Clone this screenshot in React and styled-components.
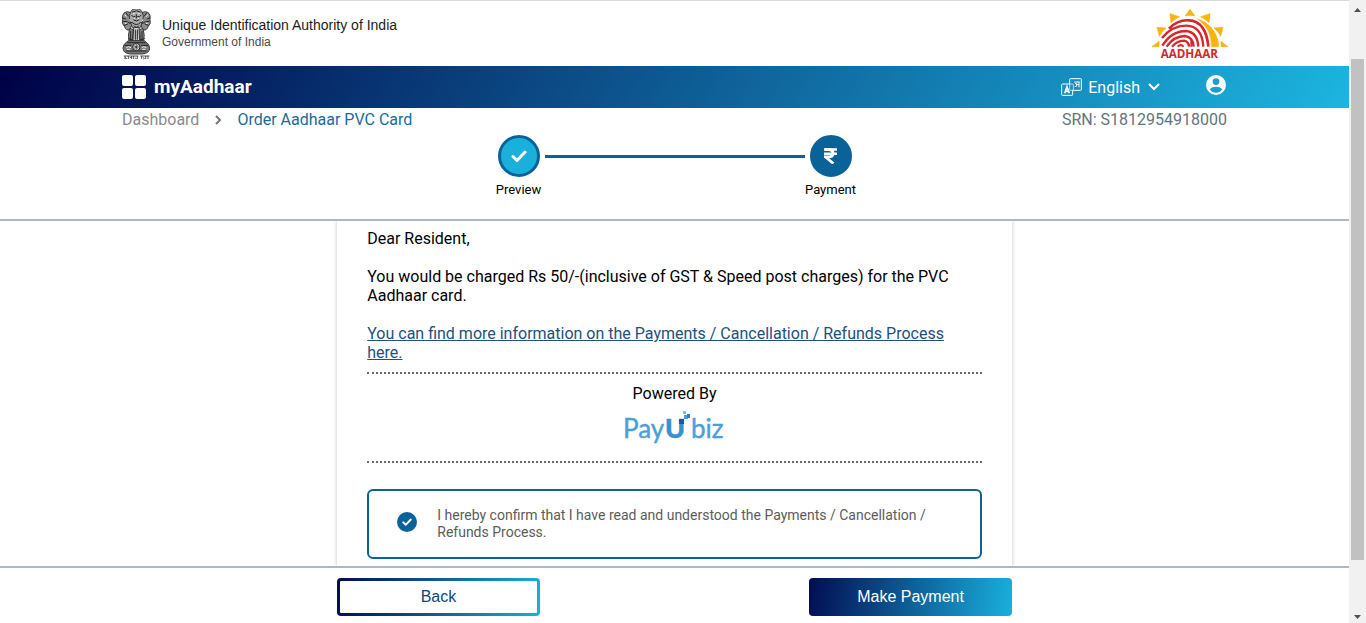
import React from "react";
import styled, { createGlobalStyle } from "styled-components";

const GlobalStyle = createGlobalStyle`
  * { box-sizing: border-box; }
  body {
    margin: 0;
    background: #fff;
    color: #000;
    font-family: Roboto, "Liberation Sans", sans-serif;
    font-size: 16px;
    line-height: 19px;
  }
  h1, h2, p { margin: 0; font-weight: 400; }
`;

const Shell = styled.div`
  display: flex;
  min-height: 100vh;
`;

const Page = styled.div`
  flex: 1;
  min-width: 0;
  display: flex;
  flex-direction: column;
`;

const Masthead = styled.header`
  display: flex;
  justify-content: space-between;
  align-items: flex-start;
  height: 66px;
  padding: 8px 120px 0;
  border-top: 1px solid #dadada;
`;

const Brand = styled.div`
  display: flex;
  gap: 10px;
`;

const BrandText = styled.div`
  padding-top: 7px;
  font-family: "Liberation Sans", Arial, sans-serif;
`;

const Authority = styled.p`
  font-size: 14px;
  line-height: 18px;
  color: #1c1c1c;
`;

const Government = styled.p`
  font-size: 12px;
  line-height: 17px;
  color: #4a4a4a;
`;

const NavBar = styled.nav`
  display: flex;
  justify-content: space-between;
  align-items: center;
  height: 42px;
  padding: 0 123px 0 122px;
  color: #fff;
  background: linear-gradient(120deg, #000046 0%, #1cb5e0 100%);
`;

const NavGroup = styled.div`
  display: flex;
  align-items: center;
  gap: ${(p) => p.$gap}px;
`;

const HomeLink = styled.a`
  display: flex;
  align-items: center;
  gap: 8px;
  color: #fff;
  font-size: 19px;
  font-weight: 700;
  line-height: 24px;
  text-decoration: none;
`;

const LanguagePicker = styled.label`
  display: flex;
  align-items: center;
  gap: 6px;
`;

const LanguageSelect = styled.select`
  appearance: none;
  border: 0;
  padding: 0;
  background: transparent;
  color: #fff;
  font: inherit;
  field-sizing: content;
  option { color: #000; }
`;

const IconButton = styled.button`
  display: flex;
  padding: 0 0 4px;
  border: 0;
  background: none;
  color: #fff;
`;

const StepArea = styled.section`
  border-bottom: 2px solid #adb8c0;
  padding: 2px 122px 21px;
`;

const Crumbs = styled.div`
  display: flex;
  justify-content: space-between;
  color: #5f7580;
`;

const Trail = styled.nav`
  display: flex;
  align-items: center;
  gap: 15px;
`;

const Crumb = styled.a`
  color: ${(p) => (p.$current ? "#186c9c" : "#8a8a8a")};
  text-decoration: none;
`;

const Stepper = styled.div`
  display: flex;
  justify-content: center;
  margin-top: 6px;
`;

const Step = styled.div`
  width: 52px;
  display: flex;
  flex-direction: column;
  align-items: center;
  gap: 4px;
  font-size: 13px;
  line-height: 17px;
`;

const StepCircle = styled.span`
  display: flex;
  align-items: center;
  justify-content: center;
  width: 42px;
  height: 42px;
  border: 3px solid #0a6398;
  border-radius: 50%;
  background: ${(p) => (p.$done ? "#19b0dc" : "#0a6398")};
`;

const StepLine = styled.span`
  width: 260px;
  height: 3px;
  margin-top: 20px;
  background: #0a6398;
`;

const Main = styled.main`
  flex: 1;
  display: flex;
  justify-content: center;
  overflow: hidden;
`;

const Card = styled.section`
  width: 50%;
  min-width: 320px;
  padding: 8px 30px 7px;
  box-shadow: 0 0 4px rgba(0, 0, 0, 0.24);
`;

const Paragraph = styled.p`
  margin-bottom: ${(p) => (p.$last ? 10 : 19)}px;
`;

const InfoLink = styled.a`
  color: #22507f;
`;

const Powered = styled.div`
  display: flex;
  flex-direction: column;
  align-items: center;
  gap: 8px;
  padding: 10px 0;
  border: dotted #6a6a6a;
  border-width: 2px 0;
`;

const Consent = styled.label`
  display: flex;
  align-items: flex-start;
  gap: 20px;
  margin-top: 26px;
  padding: 16px 28px;
  border: 2px solid #0a6398;
  border-radius: 6px;
  color: #5c5c5c;
  font-size: 14px;
  line-height: 17px;
`;

const CheckStack = styled.span`
  flex: none;
  display: grid;
  place-items: center;
  margin-top: 5px;
  > * { grid-area: 1 / 1; }
  svg { pointer-events: none; }
`;

const RoundCheckbox = styled.input`
  appearance: none;
  width: 20px;
  height: 20px;
  margin: 0;
  border: 2px solid #0a6398;
  border-radius: 50%;
  background: #fff;
  &:checked { background: #0a6398; }
`;

const Footer = styled.footer`
  display: flex;
  justify-content: center;
  border-top: 2px solid #adb8c0;
  padding: 10px 0 7px;
`;

const Actions = styled.div`
  width: 50%;
  min-width: 320px;
  display: flex;
  justify-content: space-between;
`;

const ActionButton = styled.button`
  width: 30%;
  height: 38px;
  border: 3px solid transparent;
  border-radius: 4px;
  font-family: "Liberation Sans", Arial, sans-serif;
  font-size: 16px;
  color: ${(p) => (p.$primary ? "#fff" : "#0b4a7a")};
  background: ${(p) =>
    p.$primary
      ? "linear-gradient(98deg, #020d51 0%, #19b0dc 100%) border-box"
      : "linear-gradient(#fff, #fff) padding-box, linear-gradient(98deg, #020d51 0%, #19b0dc 100%) border-box"};
`;

const ScrollRail = styled.div`
  position: sticky;
  top: 0;
  flex: none;
  display: flex;
  flex-direction: column;
  align-items: center;
  width: 17px;
  height: 100vh;
  padding: 8px 0 4px;
  background: #f1f1f1;
`;

const RailSpace = styled.span`
  flex: ${(p) => p.$size};
`;

const Thumb = styled.span`
  flex: 501;
  width: 13px;
  background: #c1c1c1;
`;

function Emblem() {
  const petals = [0, 45, 90, 135];
  return (
    <svg width="32" height="51" viewBox="-1 3 96 153" role="img" aria-label="State Emblem of India">
      <g stroke="#3a3a3a" strokeWidth="3" fill="#8c8c8c">
        <path d="M12 14q-8 8-5 20q-4 14 6 22q3 12 15 10l8-18l-4-34q-12-6-20 0z" />
        <path d="M84 14q8 8 5 20q4 14-6 22q-3 12-15 10l-8-18l4-34q12-6 20 0z" />
        <path d="M32 10q4-9 16-8q12-1 16 8q8 12 4 26l-8 22l-12 6l-12-6l-8-22q-4-14 4-26z" fill="#a8a8a8" />
        <path d="M28 62l10 2l-2 34h-10q-4-16 2-36z" />
        <path d="M68 62l-10 2l2 34h10q4-16-2-36z" />
        <path d="M40 58h16l2 40h-20z" fill="#d0d0d0" />
        <path d="M24 98h48q16 10 16 22q0 16-22 18h-36q-22-2-22-18q0-12 16-22z" fill="#777" />
      </g>
      <g fill="none" stroke="#222" strokeWidth="3" strokeLinecap="round">
        <path d="M8 30l8 3M10 40l9 1M12 52l10-4M88 30l-8 3M86 40l-9 1M84 52l-10-4M18 16l6 8M78 16l-6 8" />
        <path d="M36 12q12-8 24 0M34 22q4 8 10 4M62 22q-4 8-10 4M40 36q8 6 16 0M36 44q12 12 24 0M42 54l6 6l6-6M48 20v10" />
        <path d="M22 42q6 8 12 2M74 42q-6 8-12 2M31 70v24M65 70v24M45 66v28M51 66v28M24 92l12 4M72 92l-12 4" />
        <path d="M22 104h52M14 112h18M64 112h18M18 129h60" />
      </g>
      <g stroke="#f4f4f4" strokeWidth="3" fill="none">
        <path d="M14 20l4 6M82 20l-4 6M38 17h5M53 17h5M27 34l4 6M69 34l-4 6M18 119q6-6 14 0M64 119q6-6 14 0M20 124h10M66 124h10M40 31h4M52 31h4M14 46h5M77 46h5" />
      </g>
      <circle cx="48" cy="117" r="11" fill="#eee" stroke="#222" strokeWidth="3" />
      <g stroke="#222" strokeWidth="2">
        {petals.map((a) => (
          <path key={a} d="M39 117h18" transform={`rotate(${a} 48 117)`} />
        ))}
      </g>
      <g stroke="#333" strokeWidth="2.5" fill="none">
        <path d="M10 144h44M60 144h27M14 144v9M14 149l6 3M24 144v9M28 149h6M34 144v9M40 144v9M44 150l5 2M51 144v9M64 144v9M69 148q6 5 0 5M76 144v9M83 144v9" />
      </g>
    </svg>
  );
}

function AadhaarLogo() {
  return (
    <svg width="80" height="54" viewBox="-3 7 240 162" role="img" aria-label="Aadhaar">
      <g fill="#fbb30f" stroke="#fbb30f" strokeWidth="2" strokeLinejoin="round">
        <path d="M120 8l15 20q-15-4-30 0z" />
        <path d="M60 21l28 9q-15 7-25 18z" />
        <path d="M180 21l-28 9q15 7 25 18z" />
        <path d="M21 62l27 2q-14 11-20 25z" />
        <path d="M219 62l-27 2q14 11 20 25z" />
        <path d="M6 120l21-16v16z" />
        <path d="M234 120l-21-16v16z" />
        <path d="M143 37q48 15 61 66q2 10 1 17h-21q3-51-41-83z" />
      </g>
      <g fill="none" stroke="#d7262c" strokeWidth="7">
        <path d="M57 66Q83 39 116 41Q168 43 175 120" strokeWidth="8" />
        <path d="M36 94Q66 57 109 57Q156 58 160 120" />
        <path d="M37 117Q65 73 107 73Q142 75 145 120" />
        <path d="M50 120Q72 88 105 88Q129 91 131 120" />
        <path d="M66 120Q81 103 101 102Q116 104 117 120" />
        <path d="M83 120Q92 111 101 120M124 97V120" strokeWidth="6" />
      </g>
      <text x="32" y="154" fill="#d7262c" fontFamily="'Open Sans', sans-serif" fontWeight="700" fontSize="35">AADHAAR</text>
    </svg>
  );
}

function TilesIcon() {
  return (
    <svg width="24" height="24" viewBox="0 0 24 24" fill="#fff" aria-hidden="true">
      <rect width="11" height="11" rx="2" />
      <rect x="13" width="11" height="11" rx="2" />
      <rect y="13" width="11" height="11" rx="2" />
      <rect x="13" y="13" width="11" height="11" rx="2" />
    </svg>
  );
}

function TranslateIcon() {
  return (
    <svg width="21" height="18" viewBox="0 0 63 54" fill="none" stroke="#fff" strokeWidth="3" aria-hidden="true">
      <path d="M26 18V4q0-2 2-2h31q2 0 2 2v31q0 2-2 2H37" />
      <path d="M37 37h-9q-2 0-2-2V18h9q2 0 2 2z" strokeWidth="2" />
      <path d="M26 18H4q-2 0-2 2v30q0 2 2 2h29q2 0 2-2V37" />
      <path d="M11 46l7-20l7 20M13 40h10" strokeWidth="5" />
      <path d="M40 12h16M42 17q8-2 4 4q4 5-5 5M48 20h6M54 12v16" strokeWidth="3" />
    </svg>
  );
}

function Chevron({ width, height, d, color }) {
  return (
    <svg width={width} height={height} viewBox={`0 0 ${width} ${height}`} fill="none" stroke={color} strokeWidth="2" aria-hidden="true">
      <path d={d} />
    </svg>
  );
}

function AccountIcon() {
  return (
    <svg width="20" height="20" viewBox="0 0 20 20" aria-hidden="true">
      <circle cx="10" cy="10" r="10" fill="#fff" />
      <circle cx="10" cy="6.6" r="3.4" fill="#1a9fcf" />
      <path d="M3.6 14.2Q6 11.8 10 11.8t6.4 2.4Q14 17.7 10 17.7T3.6 14.2z" fill="#1a9fcf" />
    </svg>
  );
}

function Tick({ size }) {
  return (
    <svg width={size} height={size} viewBox="0 0 16 16" fill="none" stroke="#fff" strokeWidth="3" strokeLinecap="round" strokeLinejoin="round" aria-hidden="true">
      <path d="M2 8.5l4 4L14 4" />
    </svg>
  );
}

function Rupee() {
  return (
    <svg width="14" height="16" viewBox="0 0 14 16" fill="none" stroke="#fff" aria-hidden="true">
      <path d="M0 1.5h13M0 5.7h13" strokeWidth="2.4" />
      <path d="M1 1.5h3.500Q9 1.7 9 5.2Q9 9 4 9H1.500L9.500 15.500" strokeWidth="2.8" />
    </svg>
  );
}

function PayUbizLogo() {
  return (
    <svg width="108" height="40" viewBox="-4 0 108 40" role="img" aria-label="PayUbiz" fill="#4a9fd8" stroke="#4a9fd8" strokeWidth="0.4" fontFamily="Lato, sans-serif" fontSize="26">
      <text x="-2" y="27">Pay</text>
      <text x="40" y="27" fill="#3a8fcf" stroke="#3a8fcf" fontWeight="900" fontSize="27">U</text>
      <text x="66" y="27">biz</text>
      <g stroke="none">
        <rect x="54" y="8" width="5" height="5" fill="#0d5fae" />
        <rect x="59" y="4" width="4" height="4" fill="#4a9fd8" />
        <rect x="62" y="3" width="3" height="4" fill="#2a80c4" />
        <rect x="58" y="0" width="3" height="3" fill="#7dbbe4" />
      </g>
    </svg>
  );
}

function Arrow({ down }) {
  return (
    <svg width="7" height="4" viewBox="0 0 7 4" fill="#505050" aria-hidden="true">
      <path d={down ? "M0 0h7L3.500 4z" : "M0 4h7L3.500 0z"} />
    </svg>
  );
}

export default function App() {
  return (
    <>
      <GlobalStyle />
      <Shell>
        <Page>
          <Masthead>
            <Brand>
              <Emblem />
              <BrandText>
                <Authority>Unique Identification Authority of India</Authority>
                <Government>Government of India</Government>
              </BrandText>
            </Brand>
            <AadhaarLogo />
          </Masthead>

          <NavBar>
            <HomeLink href="#home">
              <TilesIcon />
              myAadhaar
            </HomeLink>
            <NavGroup $gap={46}>
              <LanguagePicker>
                <TranslateIcon />
                <NavGroup $gap={8}>
                  <LanguageSelect aria-label="Language" defaultValue="en">
                    <option value="en">English</option>
                  </LanguageSelect>
                  <Chevron width={12} height={8} d="M1 1l5 5l5-5" color="#fff" />
                </NavGroup>
              </LanguagePicker>
              <IconButton type="button" aria-label="Account">
                <AccountIcon />
              </IconButton>
            </NavGroup>
          </NavBar>

          <StepArea>
            <Crumbs>
              <Trail aria-label="Breadcrumb">
                <Crumb href="#dashboard">Dashboard</Crumb>
                <Chevron width={8} height={10} d="M2 1l4 4l-4 4" color="#757575" />
                <Crumb href="#order" $current>Order Aadhaar PVC Card</Crumb>
              </Trail>
              <p>SRN: S1812954918000</p>
            </Crumbs>
            <Stepper>
              <Step>
                <StepCircle $done><Tick size={16} /></StepCircle>
                Preview
              </Step>
              <StepLine />
              <Step>
                <StepCircle><Rupee /></StepCircle>
                Payment
              </Step>
            </Stepper>
          </StepArea>

          <Main>
            <Card>
              <Paragraph>Dear Resident,</Paragraph>
              <Paragraph>
                You would be charged Rs 50/-(inclusive of GST &amp; Speed post charges) for the PVC Aadhaar card.
              </Paragraph>
              <Paragraph $last>
                <InfoLink href="#refunds">
                  You can find more information on the Payments / Cancellation / Refunds Process here.
                </InfoLink>
              </Paragraph>
              <Powered>
                <p>Powered By</p>
                <PayUbizLogo />
              </Powered>
              <Consent>
                <CheckStack>
                  <RoundCheckbox type="checkbox" defaultChecked />
                  <Tick size={10} />
                </CheckStack>
                <span>
                  I hereby confirm that I have read and understood the Payments / Cancellation / Refunds Process.
                </span>
              </Consent>
            </Card>
          </Main>

          <Footer>
            <Actions>
              <ActionButton type="button">Back</ActionButton>
              <ActionButton type="button" $primary>Make Payment</ActionButton>
            </Actions>
          </Footer>
        </Page>
        <ScrollRail aria-hidden="true">
          <Arrow />
          <RailSpace $size={47} />
          <Thumb />
          <RailSpace $size={55} />
          <Arrow down />
        </ScrollRail>
      </Shell>
    </>
  );
}
